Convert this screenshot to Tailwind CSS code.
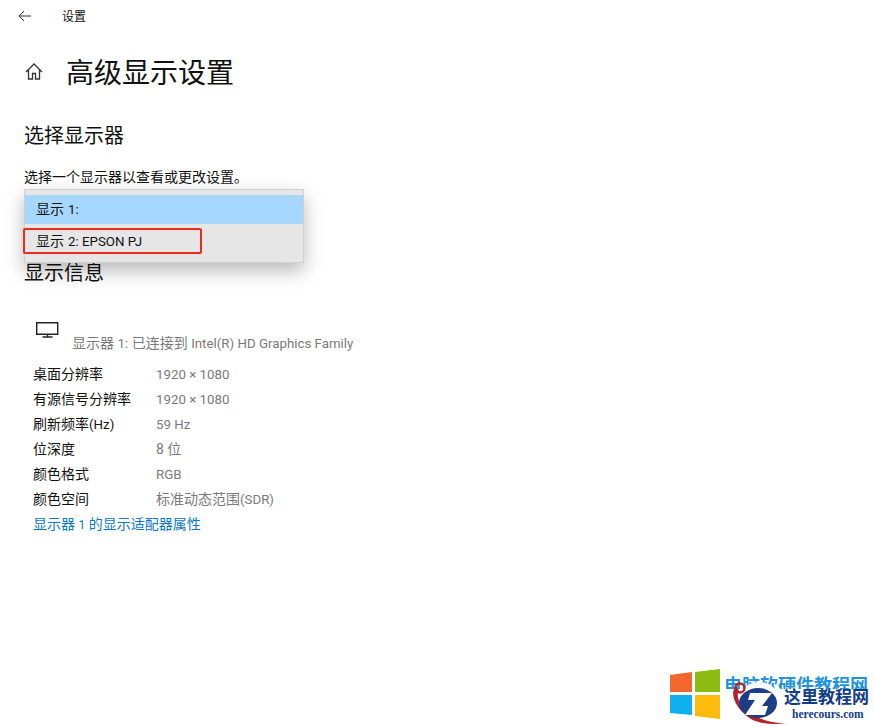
<!DOCTYPE html>
<html lang="zh">
<head>
<meta charset="utf-8">
<title>高级显示设置</title>
<script src="https://cdn.jsdelivr.net/npm/@tailwindcss/browser@4"></script>
</head>
<body class="bg-white font-['Roboto','Noto_Sans_CJK_SC',sans-serif] text-[#111] overflow-hidden">
<div class="relative h-[726px] w-[874px] overflow-hidden">

  <!-- 顶栏 -->
  <div class="flex h-[32px] items-center pl-[18px]">
    <svg class="h-[12px] w-[13px]" viewBox="0 0 13 12" fill="none" stroke="#333" stroke-width="1"><path d="M13 6H1M6 1 1 6l5 5"/></svg>
    <span class="mt-[2px] ml-[31px] text-[12px]">设置</span>
  </div>

  <!-- 标题 -->
  <div class="mt-[20px] flex h-[44px] items-center pl-[25px]">
    <svg class="mt-[-5px] h-[17px] w-[18px]" viewBox="0 0 18 17" fill="none" stroke="#333" stroke-width="1.3"><path d="M1 9 9 1l8 8M3.5 7v9h4v-5.5h3V16h4V7"/></svg>
    <h1 class="ml-[23px] text-[28px] leading-none">高级显示设置</h1>
  </div>

  <h2 class="mt-[26px] pl-[24px] text-[20px] leading-[28px]">选择显示器</h2>
  <p class="mt-[17px] pl-[24px] text-[14px] leading-[20px]">选择一个显示器以查看或更改设置。</p>

  <!-- 下拉列表 -->
  <div class="relative z-10 mt-[2px] ml-[24px] h-[74px] w-[280px] border border-[#cfcfcf] bg-[#e6e6e6] pt-[5px] shadow-[0_8px_18px_rgba(0,0,0,0.28)]">
    <div class="flex h-[29px] items-center gap-1 bg-[#a6d8ff] pl-[11px] text-[14px]">显示 <span class="text-[13.3px]">1:</span></div>
    <div class="flex h-[35px] items-center gap-1 pl-[11px] text-[14px]">显示 <span class="text-[13.3px]">2: EPSON PJ</span></div>
    <div class="absolute top-[38px] left-[-2px] h-[26px] w-[179px] rounded-[2px] border-[2.5px] border-[#ee2a1f]"></div>
  </div>

  <h2 class="mt-[-4px] pl-[24px] text-[20px] leading-[28px]">显示信息</h2>

  <!-- 显示器信息 -->
  <div class="mt-[35px] flex pl-[36px]">
    <svg class="h-[16px] w-[23px]" viewBox="0 0 23 16" fill="none" stroke="#222" stroke-width="1.4"><path d="M.7.7h21v11.6H.7zM11.5 12.5V15M6.5 15h10"/></svg>
    <span class="mt-[11px] ml-[13px] text-[14px] leading-[20px] text-[#7a7a7a]">显示器 <span class="text-[13.3px]">1:</span> 已连接到 <span class="text-[13.3px]">Intel(R) HD Graphics Family</span></span>
  </div>

  <dl class="mt-[8px] grid grid-cols-[123px_1fr] pl-[33px] text-[14px] leading-[25px]">
    <dt>桌面分辨率</dt><dd class="text-[13.3px] text-[#7a7a7a]">1920 × 1080</dd>
    <dt>有源信号分辨率</dt><dd class="text-[13.3px] text-[#7a7a7a]">1920 × 1080</dd>
    <dt>刷新频率<span class="text-[13.3px]">(Hz)</span></dt><dd class="text-[13.3px] text-[#7a7a7a]">59 Hz</dd>
    <dt>位深度</dt><dd class="text-[#7a7a7a]">8 位</dd>
    <dt>颜色格式</dt><dd class="text-[13.3px] text-[#7a7a7a]">RGB</dd>
    <dt>颜色空间</dt><dd class="text-[#7a7a7a]">标准动态范围<span class="text-[13.3px]">(SDR)</span></dd>
  </dl>
  <a class="block pl-[33px] text-[14px] leading-[25px] text-[#0a78c8]">显示器 <span class="text-[12px]">1</span> 的显示适配器属性</a>

  <!-- 水印 -->
  <svg class="absolute top-[669px] left-[669px] h-[50px] w-[52px]" viewBox="0 0 52 50">
    <path d="M1 6 23 3V23H1z" fill="#f2672e"/>
    <path d="M26 3 51 0V23H26z" fill="#8cbb12"/>
    <path d="M1 26H23V46L1 44z" fill="#0fb0ee"/>
    <path d="M26 26H51V50L26 47z" fill="#fdbb0c"/>
  </svg>
  <div class="absolute top-[675px] left-[724px] h-[14px] w-[145px] overflow-hidden text-[18px] leading-[22px] font-bold whitespace-nowrap text-[#1f93dd]">电脑软硬件教程网</div>
  <svg class="absolute top-[682px] left-[726px] h-[44px] w-[62px]" viewBox="0 0 62 44">
    <circle cx="33" cy="22" r="22" fill="#fff"/>
    <path d="M9 5C3 14 12 29 25 37c9 5 24 6 34 4-12 0-25-3-35-10C15 25 9 15 13 8z" fill="#b3232b"/>
    <circle cx="14" cy="6" r="4.5" fill="none" stroke="#b3232b" stroke-width="2.5"/>
    <ellipse cx="32" cy="21" rx="19" ry="15" fill="#1c3e86"/>
    <path d="M24 11H46L36 24h6l-3 9H19l10-15h-7z" fill="#fff"/>
  </svg>
  <div class="absolute top-[687px] left-[784px] text-[17px] leading-[20px] font-bold whitespace-nowrap text-[#123c86]">这里教程网</div>
  <div class="absolute top-[707px] left-[792px] font-['Liberation_Serif',serif] text-[11.5px] leading-[14px] font-bold whitespace-nowrap text-[#123c86]">herecours.com</div>
</div>
</body>
</html>
